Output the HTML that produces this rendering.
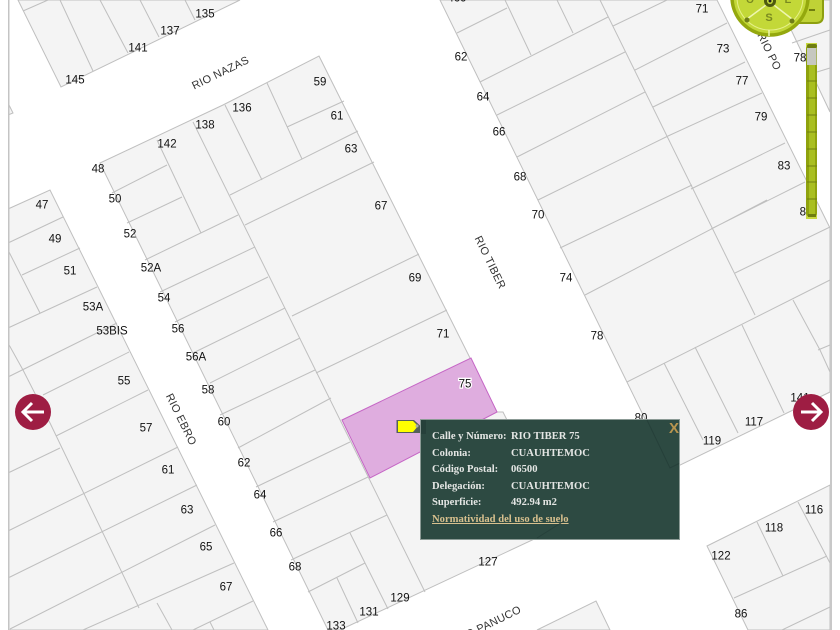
<!DOCTYPE html>
<html><head><meta charset="utf-8"><style>
html,body{margin:0;padding:0;background:#fff}
#w{position:relative;width:840px;height:630px;overflow:hidden;background:#fff}
svg{position:absolute;left:0;top:0}
.l text{font:11.5px "Liberation Sans",sans-serif;fill:#111;text-anchor:middle;dominant-baseline:central}
.s text{font:11px "Liberation Sans",sans-serif;fill:#333;text-anchor:middle;letter-spacing:.3px}
#p{position:absolute;left:420px;top:419px;width:258px;height:119px;background:#2d4a42;border:1px solid #8b9a95;font:bold 10.6px "Liberation Serif",serif;color:#e4e6e4}
#p div{position:absolute;white-space:nowrap;line-height:14px}
</style></head><body><div id="w">
<svg width="840" height="630" viewBox="0 0 840 630">
<g fill="#f4f4f4" stroke="#bfbfbf" stroke-width="1">
<polygon points="18,0 61,87 240,0"/>
<polygon points="8,103 13,113 8,115"/>
<polygon points="319,56 497,412 503,412 507,420 560,527 340,630 328,630 100,163 223,105"/>
<polygon points="8,209 50,190 268,630 8,630"/>
<polygon points="440,0 670,470 830,392 830,228 717,0"/>
<polygon points="777,0 830,112 830,0"/>
<polygon points="707,546 830,485 830,630 748,630"/>
<polygon points="596,601 610,630 537,630"/>
</g>
<g fill="none" stroke="#bfbfbf" stroke-width="1">
<path d="M23,11L48,0M60,0L93,71M100,0L128,53M140,0L159,37M185,0L195,20"/>
<path d="M157,140L201,233M193,122L425,592M225,105L262,180M230,195L358,131M267,83L302,159M287,127L344,101M245,225L374,162M292,316L419,254M316,373L447,310"/>
<path d="M112,193L167,165M127,223L182,197M145,260L238,215M160,292L255,247M175,322L268,277M193,353L285,308M210,383L300,338M220,415L315,370M238,448L331,398M256,487L350,442M273,522L368,477M291,560L387,515M308,592L365,563M350,533L388,609M337,578L358,623"/>
<path d="M8,243L63,217M22,275L80,248M8,250L40,313M8,328L97,287M8,377L117,323M8,343L23,370L50,423L139,608M43,395L129,352M56,436L148,390M8,473L60,448M8,531L178,447M8,578L197,485M10,629L215,525M83,630L234,563M157,603L172,630M193,630L253,601M210,622L214,630"/>
<path d="M457,33L507,8M505,0L531,55M557,0L573,33M480,82L608,17M497,115L625,52M517,157L645,92M538,200L668,136M560,248L692,185M585,295L767,200M627,382L830,280M600,0L755,315M742,325L784,413M613,26L667,0M635,70L727,23M653,107L745,62M668,136L762,93M691,189L785,143M711,229L805,182M735,273L830,227M664,363L703,440M695,347L738,433M793,300L820,350L830,372M818,350L830,345M792,43L830,30M817,72L830,68"/>
<path d="M757,522L783,576M798,502L830,563M734,598L827,556M782,630L830,607"/>
</g>
<polygon points="342,420 471,358 497,412 370,478" fill="#dfaddf" stroke="#c566c5" stroke-width="1"/>
<g class="l" transform="translate(0,.6)">
<text x="205" y="14">135</text><text x="170" y="31">137</text><text x="138" y="48">141</text><text x="75" y="80">145</text>
<text x="242" y="108">136</text><text x="205" y="125">138</text><text x="167" y="144">142</text><text x="98" y="169">48</text><text x="115" y="199">50</text>
<text x="42" y="205">47</text><text x="55" y="239">49</text><text x="130" y="234">52</text><text x="70" y="271">51</text><text x="151" y="268">52A</text>
<text x="164" y="298">54</text><text x="93" y="307">53A</text><text x="112" y="331">53BIS</text><text x="178" y="329">56</text><text x="196" y="357">56A</text>
<text x="124" y="381">55</text><text x="208" y="390">58</text><text x="224" y="422">60</text><text x="146" y="428">57</text><text x="244" y="463">62</text>
<text x="168" y="470">61</text><text x="260" y="495">64</text><text x="187" y="510">63</text><text x="276" y="533">66</text><text x="206" y="547">65</text>
<text x="295" y="567">68</text><text x="226" y="587">67</text><text x="400" y="598">129</text><text x="369" y="612">131</text><text x="336" y="626">133</text>
<text x="488" y="562">127</text><text x="320" y="82">59</text><text x="337" y="116">61</text><text x="351" y="149">63</text><text x="381" y="206">67</text>
<text x="415" y="278">69</text><text x="443" y="334">71</text><text x="461" y="57">62</text><text x="483" y="97">64</text><text x="499" y="132">66</text>
<text x="520" y="177">68</text><text x="538" y="215">70</text><text x="566" y="278">74</text><text x="597" y="336">78</text><text x="641" y="418">80</text>
<text x="702" y="9">71</text><text x="723" y="49">73</text><text x="742" y="81">77</text><text x="761" y="117">79</text><text x="784" y="166">83</text>
<text x="800" y="58">78</text><text x="712" y="441">119</text><text x="754" y="422">117</text><text x="800" y="398">141</text><text x="806" y="212">85</text>
<text x="721" y="556">122</text><text x="774" y="528">118</text><text x="814" y="510">116</text><text x="741" y="614">86</text><text x="457" y="-2">469</text>
<text x="465" y="384" stroke="#fff" stroke-width="2.5" style="paint-order:stroke">75</text>
</g>
<g class="s">
<text transform="translate(222,76) rotate(-26)">RIO NAZAS</text>
<text transform="translate(487,264) rotate(64)">RIO TIBER</text>
<text transform="translate(178,421) rotate(64)">RIO EBRO</text>
<text transform="translate(766,53) rotate(64)">RIO PO</text>
<text transform="translate(522,612) rotate(-26)" style="text-anchor:end">RIO PANUCO</text>
</g>
<rect x="8" y="0" width="1.5" height="630" fill="#c4c4c4"/>
<rect x="830" y="0" width="2" height="630" fill="#c8c8c8"/>
<rect x="832" y="0" width="8" height="630" fill="#fff"/>
<rect x="0" y="0" width="8" height="630" fill="#fff"/>
<!-- zoom control -->
<path d="M795,-2H823V16Q823,23 816,23H795Z" fill="#bfd236" stroke="#8d9f10" stroke-width="2"/>
<rect x="809" y="9" width="6" height="2" fill="#6f7d10"/>
<circle cx="770" cy="-3" r="38" fill="#c3d838" stroke="#94a80e" stroke-width="3.5"/>
<circle cx="770" cy="-3" r="33" fill="none" stroke="#e6f08a" stroke-width="1"/>
<path d="M770,2L747,19M770,2L792,19M769,36V30" stroke="#eef6b0" stroke-width="1.5" fill="none"/>
<circle cx="747" cy="20" r="2.5" fill="#6f7d18"/><circle cx="792" cy="21" r="2.5" fill="#6f7d18"/>
<circle cx="770" cy="1" r="6" fill="#4e5a10"/><circle cx="770" cy="1" r="3" fill="#c9de3e"/><circle cx="770" cy="1" r="1.5" fill="#222"/>
<text x="769" y="21" font-family="Liberation Sans,sans-serif" font-size="11" font-weight="bold" fill="#7a8a20" text-anchor="middle">S</text>
<text x="750" y="3" font-family="Liberation Sans,sans-serif" font-size="10" font-weight="bold" fill="#7a8a20" text-anchor="middle">O</text>
<text x="788" y="3" font-family="Liberation Sans,sans-serif" font-size="10" font-weight="bold" fill="#7a8a20" text-anchor="middle">E</text>
<!-- slider -->
<rect x="806" y="43" width="11" height="176" fill="#c8d840"/>
<rect x="806" y="45" width="11" height="172" rx="4" fill="#8fa20e"/>
<rect x="809" y="65" width="6" height="150" fill="#a9bf20"/>
<rect x="807" y="48" width="9.5" height="17" fill="#c6c8c0"/>
<rect x="807" y="44" width="10" height="4" rx="2" fill="#6e7d10"/>
<rect x="808" y="214" width="8" height="3" fill="#6e7d10"/>
<path d="M807,81H817M807,98H817M807,115H817M807,132H817M807,149H817M807,166H817M807,182H817M807,199H817" stroke="#6f7f10" stroke-width="1"/>
<!-- arrows -->
<circle cx="33" cy="412" r="18" fill="#9e1d43"/>
<path d="M44,412H24M32,403L23,412L32,421" stroke="#fff" stroke-width="3" fill="none"/>
<circle cx="811" cy="412" r="18" fill="#9e1d43"/>
<path d="M801,412H820M812,403L821,412L812,421" stroke="#fff" stroke-width="3" fill="none"/>
<!-- marker -->
<path d="M396.5,420H414L421,426.5V433H396.5Z" fill="#56605a"/>
<path d="M398,421H413L418,426L413,432H398Z" fill="#ffff00"/>
<circle cx="417" cy="426" r="1.5" fill="#aaa"/>
</svg>
<div id="p">
<div style="left:11px;top:10px">Calle y Número:</div><div style="left:90px;top:10px">RIO TIBER 75</div>
<div style="left:11px;top:27px">Colonia:</div><div style="left:90px;top:27px">CUAUHTEMOC</div>
<div style="left:11px;top:43px">Código Postal:</div><div style="left:90px;top:43px">06500</div>
<div style="left:11px;top:60px">Delegación:</div><div style="left:90px;top:60px">CUAUHTEMOC</div>
<div style="left:11px;top:76px">Superficie:</div><div style="left:90px;top:76px">492.94 m2</div>
<div style="left:11px;top:93px;color:#d8c08e;text-decoration:underline">Normatividad del uso de suelo</div>
<div style="left:248px;top:1px;color:#b8954f;font:bold 15px/16px 'Liberation Sans',sans-serif">X</div>
</div>
<svg width="840" height="630" viewBox="0 0 840 630" style="pointer-events:none">
<path d="M647,420L670,468L679,463.5M564,521L537,538" stroke="#26403a" stroke-width="1" fill="none"/>
<rect x="421" y="420" width="5" height="14" fill="#26403a"/>
</svg>
</div></body></html>
